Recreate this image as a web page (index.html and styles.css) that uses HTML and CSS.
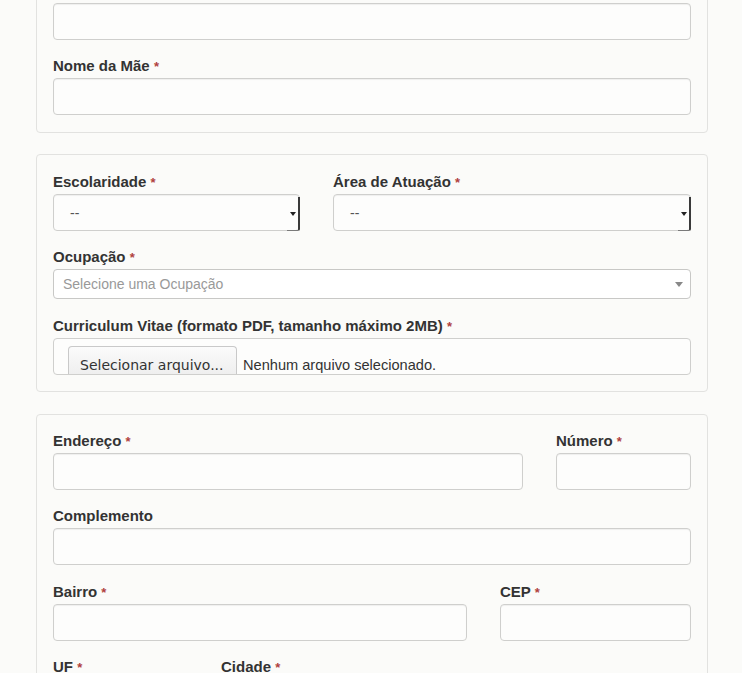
FILE: index.html
```html
<!DOCTYPE html>
<html lang="pt-BR">
<head>
<meta charset="utf-8">
<title>Cadastro</title>
<link rel="stylesheet" href="styles.css">
</head>
<body>
<div class="page">
  <section class="panel panel-first">
    <div class="group">
      <label class="lbl">Nome do Pai</label>
      <div class="input"></div>
    </div>
    <div class="group">
      <label class="lbl">Nome da Mãe <span class="req">*</span></label>
      <div class="input"></div>
    </div>
  </section>

  <section class="panel">
    <div class="row cols-esc">
      <div class="group">
        <label class="lbl">Escolaridade <span class="req">*</span></label>
        <div class="native-select"><span class="sel-text">--</span><span class="sel-edge"></span></div>
      </div>
      <div class="group">
        <label class="lbl">Área de Atuação <span class="req">*</span></label>
        <div class="native-select"><span class="sel-text">--</span><span class="sel-edge"></span></div>
      </div>
    </div>
    <div class="group group-s2">
      <label class="lbl">Ocupação <span class="req">*</span></label>
      <div class="select2"><span class="placeholder">Selecione uma Ocupação</span><span class="s2-arrow"></span></div>
    </div>
    <div class="group group-file">
      <label class="lbl">Curriculum Vitae (formato PDF, tamanho máximo 2MB) <span class="req">*</span></label>
      <div class="file-box">
        <span class="file-btn">Selecionar arquivo...</span>
        <span class="file-none">Nenhum arquivo selecionado.</span>
      </div>
    </div>
  </section>

  <section class="panel panel-address">
    <div class="row cols-end">
      <div class="group">
        <label class="lbl">Endereço <span class="req">*</span></label>
        <div class="input"></div>
      </div>
      <div class="group">
        <label class="lbl">Número <span class="req">*</span></label>
        <div class="input"></div>
      </div>
    </div>
    <div class="group group-comp">
      <label class="lbl">Complemento</label>
      <div class="input"></div>
    </div>
    <div class="row cols-bai">
      <div class="group">
        <label class="lbl">Bairro <span class="req">*</span></label>
        <div class="input"></div>
      </div>
      <div class="group">
        <label class="lbl">CEP <span class="req">*</span></label>
        <div class="input"></div>
      </div>
    </div>
    <div class="row cols-uf">
      <div class="group">
        <label class="lbl">UF <span class="req">*</span></label>
        <div class="native-select"><span class="sel-text">--</span><span class="sel-edge"></span></div>
      </div>
      <div class="group">
        <label class="lbl">Cidade <span class="req">*</span></label>
        <div class="native-select"><span class="sel-text">--</span><span class="sel-edge"></span></div>
      </div>
    </div>
  </section>
</div>
</body>
</html>
```
FILE: styles.css
```css
html, body {
  margin: 0;
  padding: 0;
  background: #fbfbf9;
  font-family: "Liberation Sans", Arial, Helvetica, sans-serif;
  font-size: 14px;
  color: #333;
  overflow: hidden;
}

.page {
  width: 672px;
  margin: -37px 0 0 36px;
}

.panel {
  border: 1px solid #e2e2e0;
  border-radius: 4px;
  background: #fbfbf9;
  padding: 16px 16px 2px 16px;
  margin-bottom: 22px;
}

.panel-first {
  margin-bottom: 21px;
}

.panel-address {
  padding-top: 15px;
}

.group {
  margin-bottom: 15px;
  min-width: 0;
}

.group-file {
  margin-bottom: 14px;
}

.group-comp {
  margin-bottom: 16px;
}

.lbl {
  display: block;
  font-weight: bold;
  font-size: 15px;
  line-height: 18px;
  height: 18px;
  padding-top: 2px;
  margin-bottom: 3px;
  color: #333;
  white-space: nowrap;
}

.req {
  color: #b0413e;
  font-size: 13px;
  line-height: 0;
}

.row {
  display: grid;
  column-gap: 33px;
}

.cols-esc { grid-template-columns: 247px 1fr; }
.cols-end { grid-template-columns: 470px 1fr; }
.cols-bai { grid-template-columns: 414px 1fr; }
.cols-uf  { grid-template-columns: 135px 1fr; }

.input {
  height: 37px;
  box-sizing: border-box;
  border: 1px solid #cfcfcd;
  border-radius: 4px;
  background: #fdfdfc;
  box-shadow: inset 0 1px 1px rgba(0,0,0,0.06);
}

.native-select {
  position: relative;
  height: 37px;
  box-sizing: border-box;
  border: 1px solid #cfcfcd;
  border-radius: 4px;
  background: #fdfdfc;
  box-shadow: inset 0 1px 1px rgba(0,0,0,0.06);
  display: flex;
  align-items: center;
  padding-left: 16px;
  color: #555;
}

.sel-text {
  font-size: 14px;
  padding-top: 1px;
}

.sel-edge {
  position: absolute;
  right: -1px;
  top: 2px;
  bottom: -1px;
  width: 11px;
  border-right: 2px solid #3a3a3a;
  border-bottom: 1px solid #7a7a7a;
  border-bottom-right-radius: 2px;
}

.sel-edge::after {
  content: "";
  position: absolute;
  right: 2px;
  top: 15px;
  border-left: 3px solid transparent;
  border-right: 3px solid transparent;
  border-top: 4px solid #222;
}

.group-s2 {
  margin-bottom: 16px;
}

.select2 {
  position: relative;
  height: 30px;
  box-sizing: border-box;
  border: 1px solid #c8c8c6;
  border-radius: 4px;
  background: #fff;
  display: flex;
  align-items: center;
  padding-left: 9px;
}

.placeholder {
  color: #999;
  font-size: 14px;
}

.s2-arrow {
  position: absolute;
  right: 7px;
  top: 12px;
  border-left: 4px solid transparent;
  border-right: 4px solid transparent;
  border-top: 5px solid #888;
}

.file-box {
  height: 37px;
  box-sizing: border-box;
  border: 1px solid #cfcfcd;
  border-radius: 4px;
  background: #fdfdfc;
  overflow: hidden;
  display: flex;
  align-items: flex-start;
  padding: 7px 0 0 14px;
}

.file-btn {
  display: block;
  width: 169px;
  height: 34px;
  box-sizing: border-box;
  border: 1px solid #c9c9c9;
  border-bottom: none;
  border-radius: 4px 4px 0 0;
  background: linear-gradient(#fbfbfb, #ececec);
  font-family: "DejaVu Sans", sans-serif;
  font-size: 14px;
  color: #333;
  padding: 10px 0 0 11px;
  white-space: nowrap;
}

.file-none {
  display: block;
  margin: 11px 0 0 6px;
  font-size: 14.6px;
  color: #333;
  white-space: nowrap;
}
```
